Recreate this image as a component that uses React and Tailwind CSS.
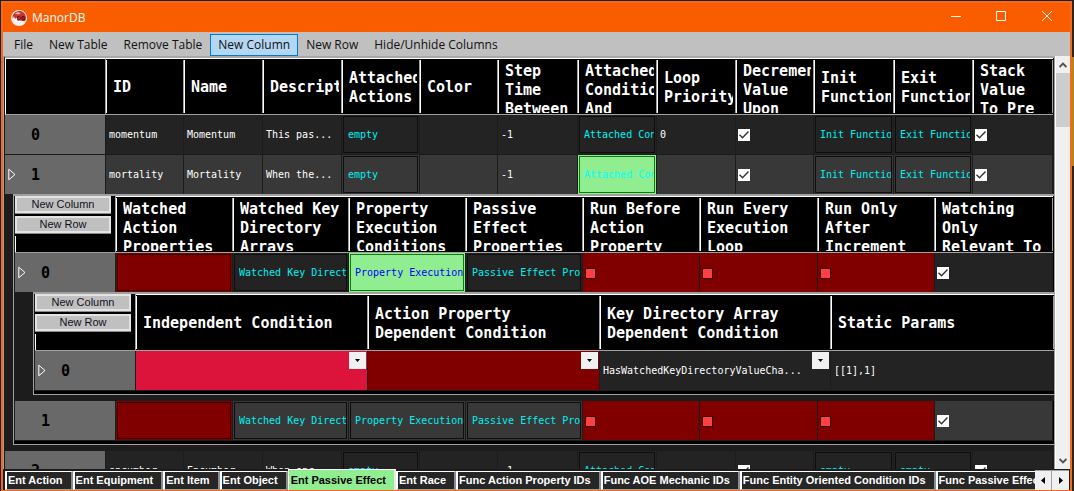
import React from "react";

const MONO = "font-['DejaVu_Sans_Mono','Liberation_Mono',monospace]";

const MENU = ["File", "New Table", "Remove Table", "New Column", "New Row", "Hide/Unhide Columns"];

const TABS = [
  "Ent Action",
  "Ent Equipment",
  "Ent Item",
  "Ent Object",
  "Ent Passive Effect",
  "Ent Race",
  "Func Action Property IDs",
  "Func AOE Mechanic IDs",
  "Func Entity Oriented Condition IDs",
  "Func Passive Effect IDs",
];

const EFFECT_COLUMNS = [
  ["ID", "w-[78px]"],
  ["Name", "w-[79px]"],
  ["Description", "w-[79px]"],
  ["Attached\nActions", "w-[78px]"],
  ["Color", "w-[78px]"],
  ["Step\nTime\nBetween", "w-[80px]"],
  ["Attached\nConditions\nAnd", "w-[79px]"],
  ["Loop\nPriority", "w-[79px]"],
  ["Decrement\nValue\nUpon", "w-[78px]"],
  ["Init\nFunctions", "w-[80px]"],
  ["Exit\nFunctions", "w-[79px]"],
  ["Stack\nValue\nTo Pre", "w-[80px]"],
];

const CONDITION_COLUMNS = [
  ["Watched\nAction\nProperties", "w-[117px]"],
  ["Watched Key\nDirectory\nArrays", "w-[116px]"],
  ["Property\nExecution\nConditions", "w-[117px]"],
  ["Passive\nEffect\nProperties", "w-[117px]"],
  ["Run Before\nAction\nProperty", "w-[117px]"],
  ["Run Every\nExecution\nLoop", "w-[118px]"],
  ["Run Only\nAfter\nIncrement", "w-[117px]"],
  ["Watching\nOnly\nRelevant To", "w-[118px]"],
];

const PROPERTY_COLUMNS = [
  ["Independent Condition", "w-[232px]"],
  ["Action Property\nDependent Condition", "w-[232px]"],
  ["Key Directory Array\nDependent Condition", "w-[231px]"],
  ["Static Params", ""],
];

function Grid({ label, columns, nested, children }) {
  return (
    <table aria-label={label} className="w-full table-fixed border-separate border-spacing-0">
      <colgroup>
        <col className="w-[101px]" />
        {columns.map(([name, width]) => (
          <col key={name} className={width} />
        ))}
      </colgroup>
      <thead>
        <tr className="h-[57px] bg-black">
          {nested ? (
            <td className="border-r border-b border-[#a0a0a0] p-0 align-top">
              <div className="flex h-14 flex-col gap-[3px] pr-1">
                <SmallButton>New Column</SmallButton>
                <SmallButton>New Row</SmallButton>
                <div className="flex-1 border-l border-white" />
              </div>
            </td>
          ) : (
            <td className="border-t border-r border-b border-l border-t-white border-r-[#a0a0a0] border-b-[#a0a0a0] border-l-white p-0" />
          )}
          {columns.map(([name]) => (
            <th
              key={name}
              scope="col"
              className="border-t border-b border-t-white border-b-[#a0a0a0] p-0 text-left align-middle"
            >
              <div className="flex h-[53px] border-r border-l border-r-[#a0a0a0] border-l-white pt-0.5 pr-0.5 pl-1.5">
                <div className="flex w-full overflow-hidden">
                  <span className="my-auto text-[15px] leading-[19px] font-bold whitespace-pre text-white">{name}</span>
                </div>
              </div>
            </th>
          ))}
        </tr>
      </thead>
      <tbody>{children}</tbody>
    </table>
  );
}

function SmallButton({ children }) {
  return (
    <button
      type="button"
      className="h-[17px] border-2 border-[#e3e3e3] bg-[#c0c0c0] font-['Liberation_Sans',Arial,sans-serif] text-[11px] leading-[13px] font-normal text-[#111122] shadow-[0_1px_0_#8a8a8a]"
    >
      {children}
    </button>
  );
}

function Row({ index, open, last, alt, children }) {
  const joined = open && !last;
  const height = joined ? "h-[39px]" : "h-10";
  const line = joined ? "" : "[&>*]:border-b [&>*]:border-b-[#1c1c1c]";
  return (
    <tr className={`${height} ${line} ${alt ? "bg-[#383838]" : "bg-[#232323]"}`}>
      <th scope="row" className="border-r border-r-[#1c1c1c] bg-[#696969] p-0 text-left">
        <div className="flex items-center pl-[3px]">
          <span className="flex w-[23px]">
            {open && (
              <svg width="9" height="13" viewBox="0 0 9 13" fill="none" stroke="#fff" aria-hidden="true">
                <path d="M0.8 1.2v10.6l6.2-5.3z" />
              </svg>
            )}
          </span>
          <span className="pt-0.5 text-[15px] leading-[19px] font-bold text-black">{index}</span>
        </div>
      </th>
      {children}
    </tr>
  );
}

const CELL = "border-r border-r-[#1c1c1c] p-0 text-left align-middle";

function TextCell({ children }) {
  return <td className={`${CELL} overflow-hidden pl-[3px] whitespace-nowrap text-white`}>{children}</td>;
}

const LINK_STYLES = {
  plain: ["", "border-[#0d0d0d] text-[#00f0f0]"],
  red: ["bg-[#800000]", "border-[#2b0000]"],
  green: ["bg-[#90ee90]", "border-[#0f7a0f] text-[#00ffff]"],
  greenBlue: ["bg-[#90ee90]", "border-[#0f7a0f] text-[#0000ff]"],
};

function LinkCell({ children, kind = "plain" }) {
  const [cell, box] = LINK_STYLES[kind];
  return (
    <td className={`${CELL} ${cell}`}>
      <div className="flex p-px">
        <button
          type="button"
          aria-label={children ? undefined : "Empty"}
          className={`flex h-[37px] w-full items-center border pl-1 text-left ${box}`}
        >
          <span className="w-full overflow-hidden whitespace-nowrap">{children}</span>
        </button>
      </div>
    </td>
  );
}

function CheckCell({ label }) {
  return (
    <td className={CELL}>
      <label className="ml-0.5 grid size-3 bg-white">
        <input type="checkbox" defaultChecked aria-label={label} className="col-start-1 row-start-1 size-3 appearance-none" />
        <svg className="pointer-events-none col-start-1 row-start-1" width="12" height="12" viewBox="0 0 12 12" fill="none" stroke="#333" strokeWidth="1.4" aria-hidden="true">
          <path d="M1.5 5.8l3 3 6-6.2" />
        </svg>
      </label>
    </td>
  );
}

function RedCheckCell({ label }) {
  return (
    <td className={`${CELL} bg-[#800000]`}>
      <input
        type="checkbox"
        aria-label={label}
        className="mt-0.5 ml-0.5 block size-[11px] appearance-none border border-[#2b0000] bg-[#ff4040]"
      />
    </td>
  );
}

function SelectCell({ value, label, color }) {
  return (
    <td className={`${CELL} ${color}`}>
      <div className="relative flex h-[39px]">
        <select aria-label={label} className="w-full appearance-none bg-transparent pl-[3px] text-white">
          <option>{value}</option>
        </select>
        <span className="pointer-events-none absolute top-px right-px flex size-[17px] items-center justify-center bg-[#f0f0f0]">
          <svg width="5" height="3" viewBox="0 0 5 3" aria-hidden="true">
            <path d="M0 0h5L2.5 3z" fill="#000" />
          </svg>
        </span>
      </div>
    </td>
  );
}

function Nested({ indent, children }) {
  return (
    <tr>
      <td colSpan={99} className={`bg-[#1c1c1c] p-0 pb-1.5 ${indent}`}>
        <div className="border-t-2 border-b border-l border-[#a0a0a0] bg-black pb-[3px]">
          <div className="border-l border-[#1c1c1c]">{children}</div>
        </div>
      </td>
    </tr>
  );
}

function EffectRow({ index, id, name, text, actions, loop, fn, alt, open, selected }) {
  return (
    <Row index={index} alt={alt} open={open}>
      <TextCell>{id}</TextCell>
      <TextCell>{name}</TextCell>
      <TextCell>{text}</TextCell>
      <LinkCell>{actions}</LinkCell>
      <TextCell />
      <TextCell>-1</TextCell>
      <LinkCell kind={selected ? "green" : "plain"}>Attached Conditions</LinkCell>
      <TextCell>{loop}</TextCell>
      <CheckCell label="Decrement Value Upon" />
      <LinkCell>{fn ? "Init Functions" : "empty"}</LinkCell>
      <LinkCell>{fn ? "Exit Functions" : "empty"}</LinkCell>
      <CheckCell label="Stack Value" />
    </Row>
  );
}

function ConditionRow({ index, alt, open }) {
  return (
    <Row index={index} alt={alt} open={open}>
      <LinkCell kind="red" />
      <LinkCell>Watched Key Directory Arrays</LinkCell>
      <LinkCell kind={open ? "greenBlue" : "plain"}>Property Execution Conditions</LinkCell>
      <LinkCell>Passive Effect Properties</LinkCell>
      <RedCheckCell label="Run Before Action Property" />
      <RedCheckCell label="Run Every Execution Loop" />
      <RedCheckCell label="Run Only After Increment" />
      <CheckCell label="Watching Only Relevant To" />
    </Row>
  );
}

function TitleBar() {
  return (
    <header className="flex h-[29px] shrink-0 items-center bg-[#fa5c00] pl-2 text-white">
      <svg width="16" height="16" viewBox="0 0 16 16" aria-hidden="true">
        <circle cx="8" cy="8" r="8" fill="#f6f0f0" />
        <path d="M3.500 2.800C5.500 1.200 8 .6 10.500 1.200 13.200 2.200 15 4.800 15 8c-.1 1.200-.4 2.200-.9 3L10.500 10.800 7 10 5.500 7.500 4 9 3 6.500 1.500 8.500C1.300 6.300 2 4.200 3.500 2.800z" fill="#cc3030" />
        <path d="M3.800 3.500L7 2.200l3 .7-3 1.500z" fill="#f3c4c0" />
        <path d="M6.700 6.500h1.600l1.200 1.600-1.200 2H6.700zM11 6.500h2.300v3.600H11zM11 8.200h2.300" fill="none" stroke="#5a1418" strokeWidth="0.9" />
      </svg>
      <h1 className="ml-[5px] text-[12px] leading-4 font-normal">ManorDB</h1>
      <div className="ml-auto flex self-start">
        <button type="button" aria-label="Minimize" className="flex h-[26px] w-[45px] items-center justify-center">
          <svg width="10" height="10" viewBox="0 0 10 10" stroke="#fff"><path d="M0 5.500h10" /></svg>
        </button>
        <button type="button" aria-label="Maximize" className="flex h-[26px] w-[46px] items-center justify-center">
          <svg width="10" height="10" viewBox="0 0 10 10" stroke="#fff" fill="none"><path d="M.5.5h9v9h-9z" /></svg>
        </button>
        <button type="button" aria-label="Close" className="flex h-[26px] w-[46px] items-center justify-center">
          <svg width="10" height="10" viewBox="0 0 10 10" stroke="#fff" fill="none"><path d="M0 0l10 10M10 0L0 10" /></svg>
        </button>
      </div>
    </header>
  );
}

function ScrollBar() {
  return (
    <div className="flex w-[15px] shrink-0 flex-col border-l border-white bg-[#f0f0f0]">
      <button type="button" aria-label="Scroll up" className="flex h-[17px] items-center justify-center">
        <svg width="8" height="6" viewBox="0 0 8 6" fill="none" stroke="#505050" strokeWidth="1.800"><path d="M.6 5L4 1.500 7.400 5" /></svg>
      </button>
      <div className="h-[54px] bg-[#cdcdcd]" />
      <button type="button" aria-label="Scroll down" className="mt-auto flex h-[17px] items-center justify-center">
        <svg width="8" height="6" viewBox="0 0 8 6" fill="none" stroke="#505050" strokeWidth="1.800"><path d="M.6 1L4 4.500 7.400 1" /></svg>
      </button>
    </div>
  );
}

function TabStrip() {
  return (
    <nav className="flex h-[21px] shrink-0 items-end bg-[#1c1c1c] pr-px pl-0.5 font-['Liberation_Sans',Arial,sans-serif] text-[11px] font-bold">
      <div className="flex min-w-0 flex-1 items-end overflow-hidden">
        {TABS.map((tab) =>
          tab === "Ent Passive Effect" ? (
            <button key={tab} type="button" aria-current="page" className="h-[21px] shrink-0 border-t border-r-2 border-l border-t-white border-r-[#e8e8e8] border-l-white bg-[#90ee90] pr-2 pl-0.5 leading-5 whitespace-nowrap text-black">
              {tab}
            </button>
          ) : (
            <button key={tab} type="button" className="h-[19px] shrink-0 border-t border-r-2 border-b border-l-2 border-t-white border-r-[#8c8c8c] border-b-[#a0a0a0] border-l-white bg-[#262626] pr-2 pl-px leading-[17px] whitespace-nowrap text-white">
              {tab}
            </button>
          )
        )}
      </div>
      <div className="flex h-5 shrink-0 bg-[#a0a0a0] pt-px">
        <button type="button" aria-label="Previous tabs" className="flex w-[17px] items-center justify-center border-r border-[#a0a0a0] bg-[#f0f0f0]">
          <svg width="4" height="7" viewBox="0 0 4 7"><path d="M4 0v7L0 3.500z" /></svg>
        </button>
        <button type="button" aria-label="Next tabs" className="flex w-[17px] items-center justify-center bg-[#f0f0f0]">
          <svg width="4" height="7" viewBox="0 0 4 7"><path d="M0 0v7l4-3.500z" /></svg>
        </button>
      </div>
    </nav>
  );
}

export default function App() {
  return (
    <div className="flex h-screen overflow-hidden bg-[#1f1f1f] pt-px pl-px font-['Open_Sans','Noto_Sans',sans-serif]">
      <div className="flex min-w-0 flex-1 flex-col border-t-2 border-r-2 border-b border-l-2 border-[#f4691e] bg-[#c0c0c0]">
        <TitleBar />
        <nav className="flex h-6 shrink-0 items-center pt-px pl-[3px] text-[12px] leading-4 text-[#111]">
          {MENU.map((item) => (
            <button
              key={item}
              type="button"
              className={
                item === "New Column"
                  ? "h-[22px] border border-[#0078d7] bg-[#b3d7f3] px-[7px] whitespace-nowrap"
                  : "h-[22px] border border-transparent px-[7px] whitespace-nowrap"
              }
            >
              {item}
            </button>
          ))}
        </nav>
        <main className="flex min-h-0 flex-1 border-l border-[#a0a0a0]">
          <div className={`min-w-0 flex-1 overflow-hidden border-t-2 border-l border-t-[#a8a8a8] border-l-[#1c1c1c] bg-[#1c1c1c] text-[10px] leading-3 ${MONO}`}>
            <div className="border-r border-[#a0a0a0]">
              <Grid label="Ent Passive Effect" columns={EFFECT_COLUMNS}>
                <EffectRow index={0} id="momentum" name="Momentum" text="This pas..." actions="empty" loop="0" fn />
                <EffectRow index={1} id="mortality" name="Mortality" text="When the..." actions="empty" fn alt open selected />
                <Nested indent="pl-2">
                  <Grid label="Attached Conditions" columns={CONDITION_COLUMNS} nested>
                    <ConditionRow index={0} open />
                    <Nested indent="pl-[18px]">
                      <Grid label="Property Execution Conditions" columns={PROPERTY_COLUMNS} nested>
                        <Row index={0} open last>
                          <SelectCell label="Independent Condition" value="" color="bg-[#dc143c]" />
                          <SelectCell label="Action Property Dependent Condition" value="" color="bg-[#800000]" />
                          <SelectCell label="Key Directory Array Dependent Condition" value="HasWatchedKeyDirectoryValueCha..." color="" />
                          <TextCell>[[1],1]</TextCell>
                        </Row>
                      </Grid>
                    </Nested>
                    <ConditionRow index={1} alt />
                  </Grid>
                </Nested>
                <EffectRow index={2} id="encumber" name="Encumber" text="When enc..." actions="empty" />
              </Grid>
            </div>
          </div>
          <ScrollBar />
        </main>
        <TabStrip />
      </div>
      <div className="w-0.5 shrink-0 bg-[#2a2626] pt-14">
        <div className="h-[109px] bg-[#b5851f]" />
      </div>
    </div>
  );
}
